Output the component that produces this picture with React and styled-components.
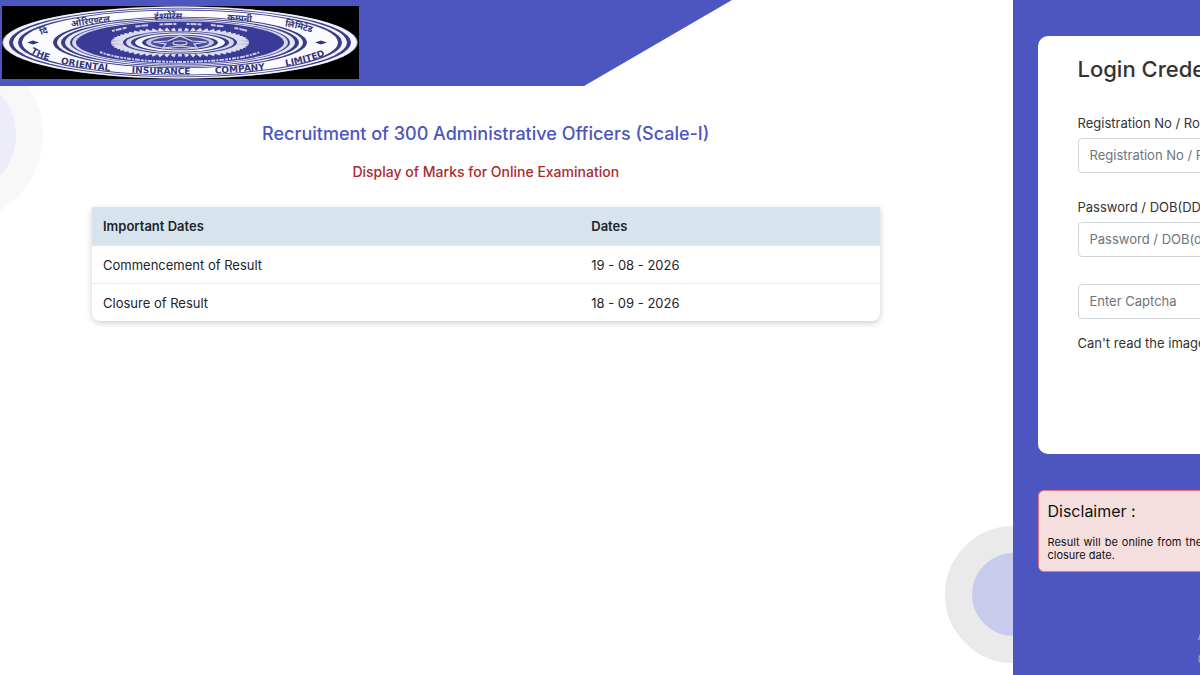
import React from 'react'
import styled, { createGlobalStyle } from 'styled-components'

const GlobalStyle = createGlobalStyle`
  * {
    box-sizing: border-box;
  }
  body {
    margin: 0;
    overflow-x: hidden;
    background: #ffffff;
    color: #212529;
    font-family: 'Inter', 'Noto Sans', sans-serif;
    font-size: 13px;
    line-height: 20px;
  }
`

const Page = styled.div`
  display: grid;
  grid-template-columns: 3fr 1fr;
  min-width: 1350px;
  min-height: 100vh;
`

const Main = styled.main`
  position: relative;
  overflow: hidden;
`

const Banner = styled.header`
  position: relative;
  z-index: 1;
  width: 732px;
  height: 86px;
  padding: 6px 2px;
  background: #4c55c0;
  clip-path: polygon(0 0, 100% 0, 584px 100%, 0 100%);
`

const LogoSvg = styled.svg`
  display: block;
  width: 357px;
  height: 73px;
`

const Circle = styled.div`
  position: absolute;
  border-radius: 50%;
  background: ${props => props.$inner};
  border: ${props => props.$ring};
  width: ${props => props.$size};
  height: ${props => props.$size};
  top: ${props => props.$top};
  bottom: ${props => props.$bottom};
  left: ${props => props.$left};
  right: ${props => props.$right};
`

const Content = styled.section`
  position: relative;
  padding: 34px 133px 40px 92px;
`

const Title = styled.h1`
  margin: 0;
  text-align: center;
  color: #4c55c0;
  font-size: 18px;
  font-weight: 500;
  line-height: 28px;
`

const Subtitle = styled.h2`
  margin: 14px 0 25px;
  text-align: center;
  color: #ab2a2e;
  font-size: 14px;
  font-weight: 500;
  line-height: 20px;
`

const DatesTable = styled.table`
  width: 100%;
  border-collapse: separate;
  border-spacing: 0;
  border-radius: 0 0 8px 8px;
  box-shadow: 0 2px 6px rgba(0, 0, 0, 0.2);
  background: #ffffff;
  line-height: 18px;
`

const HeadCell = styled.th`
  width: ${props => props.$width};
  height: 39px;
  padding: 9px 11px 10px;
  text-align: left;
  font-weight: 600;
  background: #d7e4ed;
  border-bottom: 1px solid #e6e8ea;
`

const Cell = styled.td`
  height: 38px;
  padding: 9px 11px;
  border-bottom: 1px solid #e9eaec;
  tr:last-child & {
    height: 37px;
    border-bottom: none;
  }
`

const Sidebar = styled.aside`
  padding: 36px 24px 0 25px;
  background: #4c55c0;
`

const LoginCard = styled.form`
  min-height: 418px;
  padding: 17px 40px;
  background: #ffffff;
  border-radius: 10px;
`

const CardTitle = styled.h2`
  margin: 0 0 31px;
  color: #333333;
  font-size: 22px;
  font-weight: 500;
  line-height: 32px;
  white-space: nowrap;
`

const Field = styled.div`
  margin-bottom: 27px;
`

const Label = styled.label`
  display: block;
  margin-bottom: 8px;
  color: #333333;
  line-height: 14px;
  white-space: nowrap;
`

const Input = styled.input`
  display: block;
  width: 100%;
  height: 35px;
  padding: 0 11px 2px;
  border: 1px solid #ced4da;
  border-radius: 4px;
  font-family: inherit;
  font-size: 13px;
  &::placeholder {
    color: #6c757d;
    opacity: 1;
  }
`

const CaptchaHint = styled.p`
  margin: -13px 0 0;
  color: #333333;
  white-space: nowrap;
`

const Disclaimer = styled.section`
  margin-top: 36px;
  padding: 8px 9px 9px;
  background: #f4dfde;
  border: 1px solid #e5767d;
  border-radius: 6px;
  color: #111111;
`

const DisclaimerTitle = styled.h3`
  margin: 0 0 13px;
  font-size: 16px;
  font-weight: 400;
  line-height: 24px;
`

const DisclaimerText = styled.p`
  margin: 0;
  font-size: 11px;
  line-height: 13px;
  text-align: justify;
`

const Footer = styled.footer`
  padding: 51px 0 0 160px;
  color: #a5a6b5;
  line-height: 24px;
  white-space: nowrap;
`

// the seal is a circle stretched wide, every ring keeps the same ratio
const RATIO = 0.203

const rings = [
  [178, '#6f70a8'],
  [177, '#f4f4fb'],
  [171, '#3b3c88'],
  [167, '#f4f4fb'],
  [162, '#3b3c88'],
  [158, '#fbfbff'],
  [127, '#3b3c88'],
  [123, '#f4f4fb'],
  [119, '#3b3c88'],
  [115, '#e6e6f6'],
  [110, '#3b3c88'],
  [108, '#d5d5ee'],
  [104, '#3a3b97']
]

const cores = [
  [57, '#3b3c88'],
  [54, '#d5d5ec'],
  [49, '#3b3c88'],
  [45, '#f4f4fb'],
  [38, '#3b3c88'],
  [34, '#c4c5e2'],
  [29, '#4a4b98']
]

const spokes = Array.from({ length: 60 }, (_, i) => (i / 60) * Math.PI * 2)

const sealWords = [
  { path: 'outerTop', at: '4%', text: 'दि' },
  { path: 'outerTop', at: '20%', text: 'ओरिएण्टल' },
  { path: 'outerTop', at: '46%', text: 'इंश्योरेंस' },
  { path: 'outerTop', at: '70%', text: 'कम्पनी' },
  { path: 'outerTop', at: '90%', text: 'लिमिटेड' },
  { path: 'outerBottom', at: '5%', text: 'THE' },
  { path: 'outerBottom', at: '20%', text: 'ORIENTAL' },
  { path: 'outerBottom', at: '44%', text: 'INSURANCE' },
  { path: 'outerBottom', at: '69%', text: 'COMPANY' },
  { path: 'outerBottom', at: '90%', text: 'LIMITED' }
]

const Logo = () => (
  <LogoSvg viewBox="0 0 357 73" role="img" aria-label="The Oriental Insurance Company Limited">
    <defs>
      <path id="outerTop" d="M 32 33 A 150 26 0 0 1 324 33" />
      <path id="outerBottom" d="M 24 43 A 156 30 0 0 0 332 43" />
    </defs>
    <rect width="357" height="73" fill="#000000" />
    {rings.map(([rx, fill]) => (
      <ellipse key={rx} cx="178" cy="36.5" rx={rx} ry={rx * RATIO} fill={fill} />
    ))}
    <g fill="#35367f" fontFamily="'DejaVu Sans', 'Noto Sans', sans-serif" fontWeight="700" fontSize="9">
      {sealWords.map(({ path, at, text }) => (
        <text key={text}>
          <textPath href={`#${path}`} startOffset={at} textAnchor="middle">{text}</textPath>
        </text>
      ))}
    </g>
    <path d="M25 36.5l6-2 6 2-6 2z M313 36.5l6-2 6 2-6 2z" fill="#35367f" />
    <g fill="none" stroke="#c9caea" strokeWidth="2">
      <path d="M110 25 A 82 16 0 0 1 246 25" strokeDasharray="3 1 6 1 4 9 5 1 7 11 4 1 8 1 3 10" />
      <path d="M98 46 A 88 17 0 0 0 258 46" strokeDasharray="3 1 2 1 4 1 2 1 5 1" />
    </g>
    {spokes.map(a => (
      <line
        key={a}
        x1={178 + Math.cos(a) * 52}
        y1={36.5 + Math.sin(a) * 10}
        x2={178 + Math.cos(a) * 69}
        y2={36.5 + Math.sin(a) * 14}
        stroke="#dcdcf0"
        strokeWidth={1.2 + Math.abs(Math.cos(a)) * 0.2 + Math.abs(Math.sin(a)) * 2.4}
      />
    ))}
    {cores.map(([rx, fill]) => (
      <ellipse key={rx} cx="178" cy="36.5" rx={rx} ry={rx * RATIO} fill={fill} />
    ))}
    <g fill="none" stroke="#dcdcf0" strokeWidth="1.2">
      <path d="M151 36l15-1 12-5 12 5 15 1-13 2 3 4-17-2-17 2 3-4z" />
      <ellipse cx="178" cy="37" rx="7" ry="2" />
    </g>
  </LogoSvg>
)

const dates = [
  { label: 'Commencement of Result', date: '19 - 08 - 2026' },
  { label: 'Closure of Result', date: '18 - 09 - 2026' }
]

const App = () => (
  <>
    <GlobalStyle />
    <Page>
      <Main>
        <Circle $size="176px" $top="47px" $left="-133px" $inner="#ededfa" $ring="27px solid #f8f8f8" />
        <Circle $size="137px" $bottom="12px" $right="-69px" $inner="#c9cbed" $ring="27px solid #eaeaea" />
        <Banner>
          <Logo />
        </Banner>
        <Content>
          <Title>Recruitment of 300 Administrative Officers (Scale-I)</Title>
          <Subtitle>Display of Marks for Online Examination</Subtitle>
          <DatesTable>
            <thead>
              <tr>
                <HeadCell $width="62%">Important Dates</HeadCell>
                <HeadCell $width="38%">Dates</HeadCell>
              </tr>
            </thead>
            <tbody>
              {dates.map(({ label, date }) => (
                <tr key={label}>
                  <Cell>{label}</Cell>
                  <Cell>{date}</Cell>
                </tr>
              ))}
            </tbody>
          </DatesTable>
        </Content>
      </Main>
      <Sidebar>
        <LoginCard>
          <CardTitle>Login Credentials</CardTitle>
          <Field>
            <Label htmlFor="regNo">Registration No / Roll No</Label>
            <Input id="regNo" type="text" placeholder="Registration No / Roll No" />
          </Field>
          <Field>
            <Label htmlFor="password">Password / DOB(DD-MM-YY)</Label>
            <Input id="password" type="password" placeholder="Password / DOB(dd-mm-yy)" />
          </Field>
          <Field>
            <Input id="captcha" type="text" placeholder="Enter Captcha" aria-label="Enter Captcha" />
          </Field>
          <CaptchaHint>Can't read the image?</CaptchaHint>
        </LoginCard>
        <Disclaimer>
          <DisclaimerTitle>Disclaimer :</DisclaimerTitle>
          <DisclaimerText>Result will be online from the commencement until closure date.</DisclaimerText>
        </Disclaimer>
        <Footer>
          <div>About Us</div>
          <div>Contact Us</div>
        </Footer>
      </Sidebar>
    </Page>
  </>
)

export default App
